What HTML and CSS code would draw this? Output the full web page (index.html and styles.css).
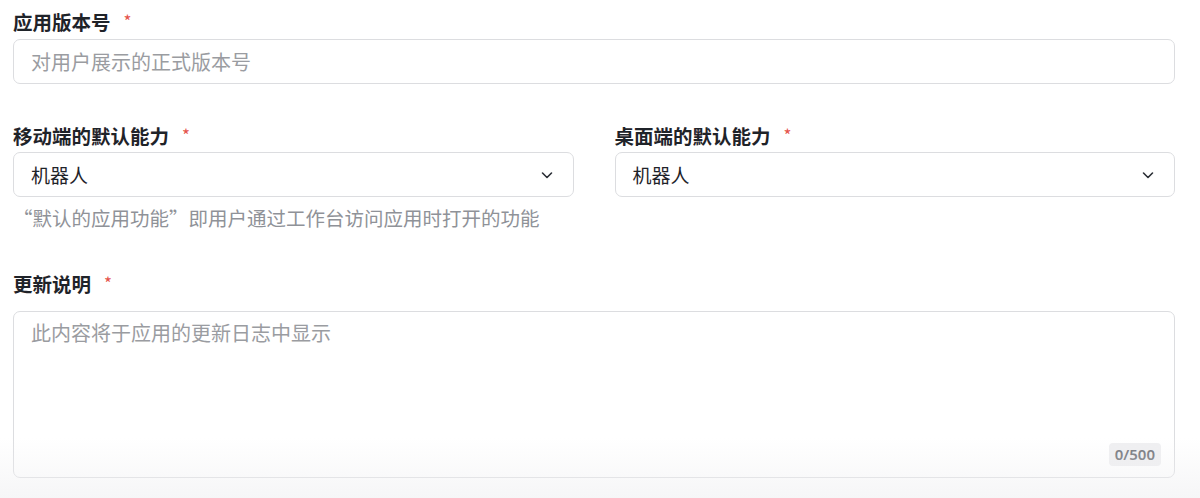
FILE: index.html
```html
<!DOCTYPE html>
<html lang="zh-CN">
<head>
<meta charset="utf-8">
<link rel="stylesheet" href="styles.css">
</head>
<body>
<form class="form">
  <div class="field">
    <div class="label">应用版本号<span class="req">*</span></div>
    <div class="input"><span class="placeholder">对用户展示的正式版本号</span></div>
  </div>

  <div class="row">
    <div class="field col">
      <div class="label">移动端的默认能力<span class="req">*</span></div>
      <div class="input select"><span class="value">机器人</span>
        <svg class="chev" width="14" height="14" viewBox="0 0 14 14"><path d="M2.5 5 L7 9.5 L11.5 5" fill="none" stroke="#2b2f36" stroke-width="1.6" stroke-linecap="round" stroke-linejoin="round"/></svg>
      </div>
      <div class="hint">“默认的应用功能”即用户通过工作台访问应用时打开的功能</div>
    </div>
    <div class="field col">
      <div class="label">桌面端的默认能力<span class="req">*</span></div>
      <div class="input select"><span class="value">机器人</span>
        <svg class="chev" width="14" height="14" viewBox="0 0 14 14"><path d="M2.5 5 L7 9.5 L11.5 5" fill="none" stroke="#2b2f36" stroke-width="1.6" stroke-linecap="round" stroke-linejoin="round"/></svg>
      </div>
    </div>
  </div>

  <div class="field notes">
    <div class="label">更新说明<span class="req">*</span></div>
    <div class="textarea">
      <span class="placeholder">此内容将于应用的更新日志中显示</span>
      <span class="counter">0/500</span>
    </div>
  </div>
</form>
</body>
</html>
```

FILE: styles.css
```css
* { box-sizing: border-box; }
html, body { margin: 0; padding: 0; }
body {
  background: #ffffff;
  font-family: "Noto Sans CJK SC", "Noto Sans", sans-serif;
  color: #1f2329;
  width: 1200px;
  height: 498px;
  overflow: hidden;
  position: relative;
}
body::after {
  content: "";
  position: absolute;
  left: 0; right: 0; bottom: 0;
  height: 60px;
  background: linear-gradient(to bottom, rgba(240,240,242,0), rgba(240,240,242,0.6));
  pointer-events: none;
}
.form {
  padding: 8px 25px 0 13px;
  display: flex;
  flex-direction: column;
}
.label {
  font-size: 19.5px;
  font-weight: 700;
  line-height: 28px;
  height: 28px;
  color: #1f2329;
  margin-bottom: 3px;
}
.req {
  color: #e5534b;
  font-weight: 400;
  margin-left: 13px;
  font-size: 17px;
  position: relative;
  top: -2px;
}
.input {
  height: 45px;
  border: 1px solid #dcdde0;
  border-radius: 7px;
  display: flex;
  align-items: center;
  padding: 0 17px;
  font-size: 20px;
}
.placeholder { color: #9a9ca1; }
.row {
  display: flex;
  gap: 41px;
  margin-top: 38px;
}
.col { flex: 1; }
.row .label { margin-bottom: 2px; }
.select { justify-content: space-between; }
.value { color: #1f2329; font-size: 19px; }
.chev { margin-right: 2px; }
.hint {
  margin-top: 9px;
  font-size: 19.5px;
  line-height: 24px;
  color: #8f9298;
}
.notes { margin-top: 40px; }
.notes .label { margin-bottom: 13px; }
.textarea {
  height: 167px;
  border: 1px solid #dcdde0;
  border-radius: 7px;
  padding: 8px 17px;
  font-size: 20px;
  line-height: 26px;
  position: relative;
}
.counter {
  position: absolute;
  right: 13px;
  bottom: 11px;
  background: #efeff1;
  color: #6f7177;
  font-size: 15px;
  font-weight: 600;
  line-height: 23px;
  padding: 0 6px;
  border-radius: 4px;
  font-family: "Noto Sans", "Noto Sans CJK SC", sans-serif;
}
```
